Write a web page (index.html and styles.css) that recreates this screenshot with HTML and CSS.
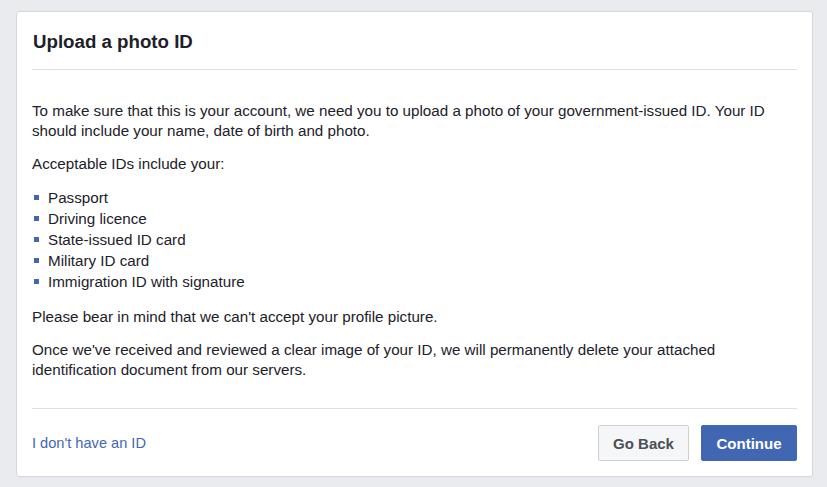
FILE: index.html
```html
<!DOCTYPE html>
<html>
<head>
<meta charset="utf-8">
<link rel="stylesheet" href="styles.css">
</head>
<body>
<div class="card">
  <div class="header"><h1 class="title">Upload a photo ID</h1></div>
  <div class="content">
    <p class="para">To make sure that this is your account, we need you to upload a photo of your government-issued ID. Your ID should include your name, date of birth and photo.</p>
    <p class="para">Acceptable IDs include your:</p>
    <ul class="list">
      <li class="item">Passport</li>
      <li class="item">Driving licence</li>
      <li class="item">State-issued ID card</li>
      <li class="item">Military ID card</li>
      <li class="item">Immigration ID with signature</li>
    </ul>
    <p class="para">Please bear in mind that we can't accept your profile picture.</p>
    <p class="para">Once we've received and reviewed a clear image of your ID, we will permanently delete your attached identification document from our servers.</p>
  </div>
  <div class="footer">
    <a class="link" href="#">I don't have an ID</a>
    <div class="buttons">
      <button class="btn btn-secondary">Go Back</button>
      <button class="btn btn-primary">Continue</button>
    </div>
  </div>
</div>
</body>
</html>
```
FILE: styles.css
```css
* { box-sizing: border-box; }
html, body { margin: 0; padding: 0; }
body {
  background: #e9ebee;
  font-family: "Liberation Sans", Arial, sans-serif;
  color: #1d2129;
  padding: 11px 14px 10px 16px;
}
.card {
  background: #fff;
  border: 1px solid #d3d6db;
  border-radius: 3px;
  width: 797px;
  height: 466px;
  padding: 0 15px;
  display: flex;
  flex-direction: column;
}
.header {
  padding: 17px 0 15px 1px;
  border-bottom: 1px solid #dddfe2;
}
.title {
  margin: 0;
  font-size: 18.7px;
  line-height: 25px;
  font-weight: bold;
  color: #1d2129;
}
.content {
  padding: 31px 0 0 0;
  font-size: 15.2px;
  line-height: 20px;
  flex: 1;
}
.para { margin: 0 0 13px; }
.list {
  list-style: none;
  margin: 0 0 15px;
  padding: 0;
}
.item {
  line-height: 21px;
  padding-left: 16px;
  position: relative;
}
.item::before {
  content: "";
  position: absolute;
  left: 2px;
  top: 8px;
  width: 5px;
  height: 5px;
  background: #4267b2;
}
.footer {
  border-top: 1px solid #dddfe2;
  padding: 16px 0 15px 0;
  display: flex;
  align-items: center;
  justify-content: space-between;
}
.link {
  font-size: 14.6px;
  color: #4267b2;
  text-decoration: none;
}
.buttons { display: flex; gap: 12px; }
.btn {
  font-family: "Liberation Sans", Arial, sans-serif;
  font-size: 15px;
  font-weight: bold;
  height: 36px;
  padding: 0 14px;
  border-radius: 2px;
  border: 1px solid;
}
.btn-secondary {
  background: #f5f6f7;
  border-color: #ccd0d5;
  color: #4b4f56;
  width: 91px;
}
.btn-primary {
  background: #4267b2;
  border-color: #4267b2;
  color: #fff;
  width: 96px;
}
```
